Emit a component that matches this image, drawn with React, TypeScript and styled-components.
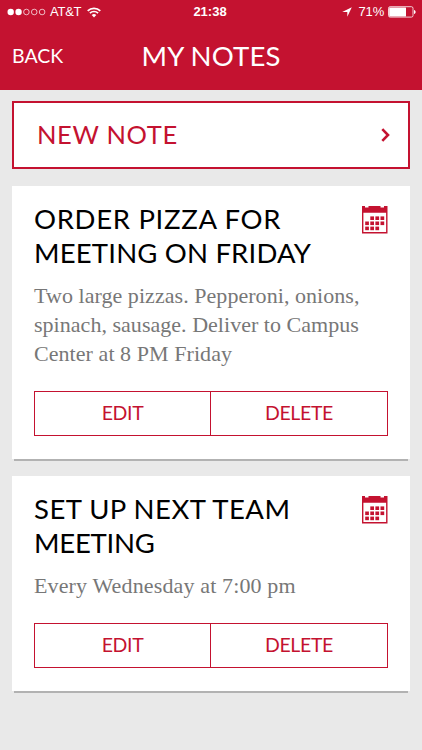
import React from "react";
import styled, { createGlobalStyle } from "styled-components";

const RED = "#c41230";

const GlobalStyle = createGlobalStyle`
  * { box-sizing: border-box; }
  body { margin: 0; background: #e9e9e9; }
  button { appearance: none; border: 0 solid ${RED}; margin: 0; padding: 0; background: none; font: inherit; color: inherit; }
`;

const Screen = styled.div`
  width: 422px;
  height: 750px;
  overflow: hidden;
  background: #e9e9e9;
  font-family: Lato, "Liberation Sans", sans-serif;
`;

const Header = styled.header`
  height: 90px;
  background: ${RED};
  color: #fff;
`;

const StatusBar = styled.div`
  display: grid;
  grid-template-columns: 1fr auto 1fr;
  align-items: center;
  height: 24px;
  padding: 0 6px 0 7px;
  font-family: "Liberation Sans", Arial, sans-serif;
  font-size: 13px;
  line-height: 24px;
`;

const StatusGroup = styled.div<{ $end?: boolean }>`
  display: flex;
  align-items: center;
  justify-content: ${(p) => (p.$end ? "flex-end" : "flex-start")};
`;

const Clock = styled.span`
  padding-right: 3px;
  font-weight: 700;
`;

const Carrier = styled.span`
  margin: 0 6px 0 4px;
  letter-spacing: -0.25px;
`;

const Percent = styled.span`
  margin: 0 4px 0 7px;
  letter-spacing: -0.2px;
`;

const NavBar = styled.div`
  display: grid;
  grid-template-columns: 1fr auto 1fr;
  align-items: center;
  height: 66px;
  padding: 0 12px 2px;
`;

const BackButton = styled.button`
  justify-self: start;
  font-size: 19.5px;
  line-height: 24px;
`;

const Title = styled.h1`
  margin: 0;
  font-size: 27.5px;
  font-weight: 400;
  letter-spacing: 0.15px;
  line-height: 34px;
`;

const Content = styled.main`
  display: flex;
  flex-direction: column;
  gap: 17px;
  padding: 11px 12px 0;
`;

const NewNote = styled.button`
  display: flex;
  align-items: center;
  justify-content: space-between;
  height: 68px;
  padding: 0 18px 0 23px;
  border-width: 2px;
  background: #fff;
  color: ${RED};
  font-size: 25.5px;
  letter-spacing: 0.65px;
  line-height: 34px;
`;

const NewNoteLabel = styled.span`
  padding-bottom: 2px;
`;

const Card = styled.article`
  padding: 16px 22px 23px;
  background: #fff;
  box-shadow: 0 4px 0 -2px #b2b2b2;
`;

const CardHead = styled.div`
  display: flex;
  align-items: flex-start;
  justify-content: space-between;

  svg { margin-top: 4px; }
`;

const CardTitle = styled.h2`
  margin: 0;
  color: #000;
  font-size: 27.5px;
  font-weight: 400;
  line-height: 34px;
`;

const Line = styled.span<{ $spacing: number }>`
  display: block;
  white-space: nowrap;
  letter-spacing: ${(p) => p.$spacing}px;
`;

const CardText = styled.p`
  margin: 11px 0 23px;
  color: #777;
  font-family: Georgia, "Liberation Serif", serif;
  font-size: 22px;
  line-height: 29px;
`;

const Actions = styled.div`
  display: grid;
  grid-template-columns: 175px 1fr;
  height: 45px;
  border: 1px solid ${RED};
`;

const Action = styled.button`
  padding-bottom: 2px;
  color: ${RED};
  font-size: 19.5px;
  letter-spacing: -0.35px;

  & + & { border-left-width: 1px; }
`;

const SignalIcon = () => (
  <svg width="39" height="10" viewBox="0 0 39 10">
    {[0, 1, 2, 3, 4].map((i) => (
      <circle
        key={i}
        cx={3.7 + i * 7.85}
        cy="5"
        r={i < 2 ? 3.2 : 2.8}
        fill={i < 2 ? "#fff" : "none"}
        stroke={i < 2 ? "none" : "#fff"}
        strokeWidth="0.7"
      />
    ))}
  </svg>
);

const WifiIcon = () => (
  <svg width="14" height="11" viewBox="0 0 14 11" fill="none" stroke="#fff" strokeWidth="1.7">
    <path d="M0.7 3.9a8.9 8.9 0 0 1 12.6 0" />
    <path d="M2.9 6.2a5.8 5.8 0 0 1 8.2 0" />
    <path d="M7 10.4L4.7 8.1a3.3 3.3 0 0 1 4.6 0Z" fill="#fff" stroke="none" />
  </svg>
);

const LocationIcon = () => (
  <svg width="10" height="10" viewBox="0 0 10 10" fill="#fff">
    <path d="M9.8 0.2L5.3 9.8V4.9H0.2Z" />
  </svg>
);

const BatteryIcon = () => (
  <svg width="28" height="12" viewBox="0 0 28 12">
    <rect x="0.5" y="0.7" width="24.5" height="10.4" rx="1.6" fill="none" stroke="#fff" strokeWidth="0.8" />
    <rect x="1.2" y="1.4" width="16.8" height="9" rx="0.5" fill="#fff" />
    <path d="M26 4v4c1.1-.3 1.6-1 1.6-2s-.5-1.7-1.6-2Z" fill="#fff" />
  </svg>
);

const ChevronIcon = () => (
  <svg width="9" height="14" viewBox="0 0 9 14" fill="none" stroke={RED} strokeWidth="2.6">
    <path d="M1.3 1.2L7 7L1.3 12.8" />
  </svg>
);

const dots = [
  [1, 0], [2, 0], [3, 0],
  [0, 1], [1, 1], [2, 1], [3, 1],
  [0, 2], [1, 2], [2, 2],
];

const CalendarIcon = () => (
  <svg width="26" height="28" viewBox="0 0 26 28" fill={RED}>
    <path d="M0 0H3V1.5H6.5V0H18.5V1.5H22V0H25.5V27.5H0ZM1.4 6.8V26.1H24.1V6.8Z" fillRule="evenodd" />
    {dots.map(([c, r]) => (
      <rect key={`${c}-${r}`} x={3.2 + c * 5.1} y={10.4 + r * 5.1} width="3.7" height="3.6" />
    ))}
  </svg>
);

type TextLine = { text: string; spacing: number };
type Note = { title: TextLine[]; body: TextLine[] };

const notes: Note[] = [
  {
    title: [
      { text: "ORDER PIZZA FOR", spacing: 0.68 },
      { text: "MEETING ON FRIDAY", spacing: 0.18 },
    ],
    body: [
      { text: "Two large pizzas. Pepperoni, onions,", spacing: 0.05 },
      { text: "spinach, sausage. Deliver to Campus", spacing: 0.03 },
      { text: "Center at 8 PM Friday", spacing: 0.06 },
    ],
  },
  {
    title: [
      { text: "SET UP NEXT TEAM", spacing: 0.47 },
      { text: "MEETING", spacing: -0.25 },
    ],
    body: [{ text: "Every Wednesday at 7:00 pm", spacing: 0.14 }],
  },
];

const Lines = ({ lines }: { lines: TextLine[] }) => (
  <>
    {lines.map((line) => (
      <Line key={line.text} $spacing={line.spacing}>{line.text}</Line>
    ))}
  </>
);

export default function App() {
  return (
    <Screen>
      <GlobalStyle />
      <Header>
        <StatusBar>
          <StatusGroup>
            <SignalIcon />
            <Carrier>AT&amp;T</Carrier>
            <WifiIcon />
          </StatusGroup>
          <Clock>21:38</Clock>
          <StatusGroup $end>
            <LocationIcon />
            <Percent>71%</Percent>
            <BatteryIcon />
          </StatusGroup>
        </StatusBar>
        <NavBar>
          <BackButton>BACK</BackButton>
          <Title>MY NOTES</Title>
        </NavBar>
      </Header>
      <Content>
        <NewNote>
          <NewNoteLabel>NEW NOTE</NewNoteLabel>
          <ChevronIcon />
        </NewNote>
        {notes.map((note) => (
          <Card key={note.title[0].text}>
            <CardHead>
              <CardTitle><Lines lines={note.title} /></CardTitle>
              <CalendarIcon />
            </CardHead>
            <CardText><Lines lines={note.body} /></CardText>
            <Actions>
              <Action>EDIT</Action>
              <Action>DELETE</Action>
            </Actions>
          </Card>
        ))}
      </Content>
    </Screen>
  );
}
